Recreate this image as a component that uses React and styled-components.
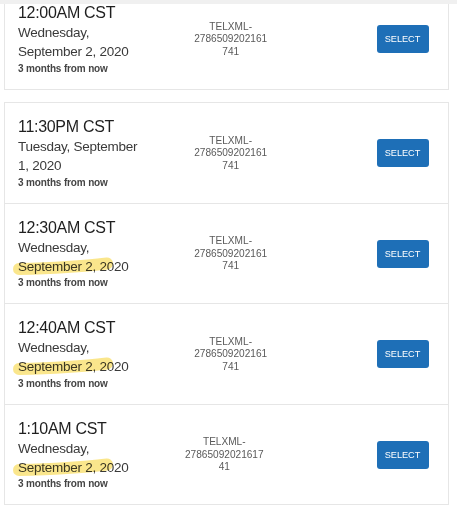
import React from 'react';
import { styled, createGlobalStyle } from 'styled-components';

const GlobalStyle = createGlobalStyle`
  body {
    margin: 0;
    background: #fff;
    font-family: "Liberation Sans", Arial, sans-serif;
  }
`;

const ID = 'TELXML-2786509202161741';

const groups = [
  {
    offset: -16,
    rows: [{ time: '12:00AM CST', date: 'Wednesday, September 2, 2020' }],
  },
  {
    offset: 12.4,
    rows: [
      { time: '11:30PM CST', date: 'Tuesday, September 1, 2020' },
      { time: '12:30AM CST', date: 'Wednesday, September 2, 2020', marked: true },
      { time: '12:40AM CST', date: 'Wednesday, September 2, 2020', marked: true },
      { time: '1:10AM CST', date: 'Wednesday, September 2, 2020', marked: true, wide: true },
    ],
  },
];

const Marker = () => (
  <MarkerSvg width="112" height="26" viewBox="0 0 112 26">
    <path
      d="M9 16 C 32 15.5, 68 14, 97 10.5"
      fill="none"
      stroke="rgba(247, 214, 70, 0.62)"
      strokeWidth="12"
      strokeLinecap="round"
    />
  </MarkerSvg>
);

const Slot = ({ time, date, marked, wide }) => (
  <Row>
    <Info>
      <Time>{time}</Time>
      <DateText>{date}</DateText>
      <Relative>3 months from now</Relative>
    </Info>
    <Ref $shift={wide ? 38.3 : 46.7} $w={wide ? 80 : 76}>
      {ID}
    </Ref>
    <SelectButton>SELECT</SelectButton>
    {marked && <Marker />}
  </Row>
);

const App = () => {
  return (
    <Page>
      <GlobalStyle />
      <TopEdge />
      <Viewport>
        {groups.map((g, i) => (
          <Group key={i} $offset={g.offset}>
            {g.rows.map((r) => (
              <Slot key={r.time} {...r} />
            ))}
          </Group>
        ))}
      </Viewport>
    </Page>
  );
};

export default App;

const Page = styled.div`
  width: 457px;
  height: 510px;
  overflow: hidden;
  background: #fff;
`;

const TopEdge = styled.div`
  position: relative;
  z-index: 2;
  height: 4px;
  background: #f0f0f0;
`;

const Viewport = styled.div`
  padding: 0 8px 0 4px;
`;

const Group = styled.div`
  margin-top: ${(p) => p.$offset}px;
  border: 1px solid #e6e6e6;
  background: #fff;
`;

const Row = styled.div`
  position: relative;
  display: flex;
  align-items: center;
  padding: 14px 19.5px 13px 13px;

  & + & {
    border-top: 1px solid #e6e6e6;
  }
`;

const Info = styled.div`
  flex: 0 0 128px;
  display: flex;
  flex-direction: column;
`;

const Time = styled.div`
  font-size: 16px;
  line-height: 20px;
  letter-spacing: -0.3px;
  color: #1f1f1f;
`;

const DateText = styled.div`
  font-size: 13.5px;
  line-height: 19.3px;
  letter-spacing: -0.25px;
  color: #3a3a3a;
`;

const Relative = styled.div`
  font-size: 10px;
  line-height: 14px;
  font-weight: 700;
  letter-spacing: -0.15px;
  color: #454545;
`;

const Ref = styled.div`
  flex: 0 0 ${(p) => p.$w}px;
  margin-left: ${(p) => p.$shift}px;
  font-size: 10.1px;
  line-height: 12.5px;
  color: #5a5a5a;
  text-align: center;
  overflow-wrap: anywhere;
`;

const SelectButton = styled.button`
  margin-left: auto;
  width: 52px;
  height: 28px;
  padding: 0;
  border: none;
  border-radius: 3px;
  background: #1e6fb7;
  color: #fff;
  font-family: inherit;
  font-size: 9.2px;
`;

const MarkerSvg = styled.svg`
  position: absolute;
  left: 5px;
  top: 49px;
  mix-blend-mode: multiply;
  pointer-events: none;
`;
